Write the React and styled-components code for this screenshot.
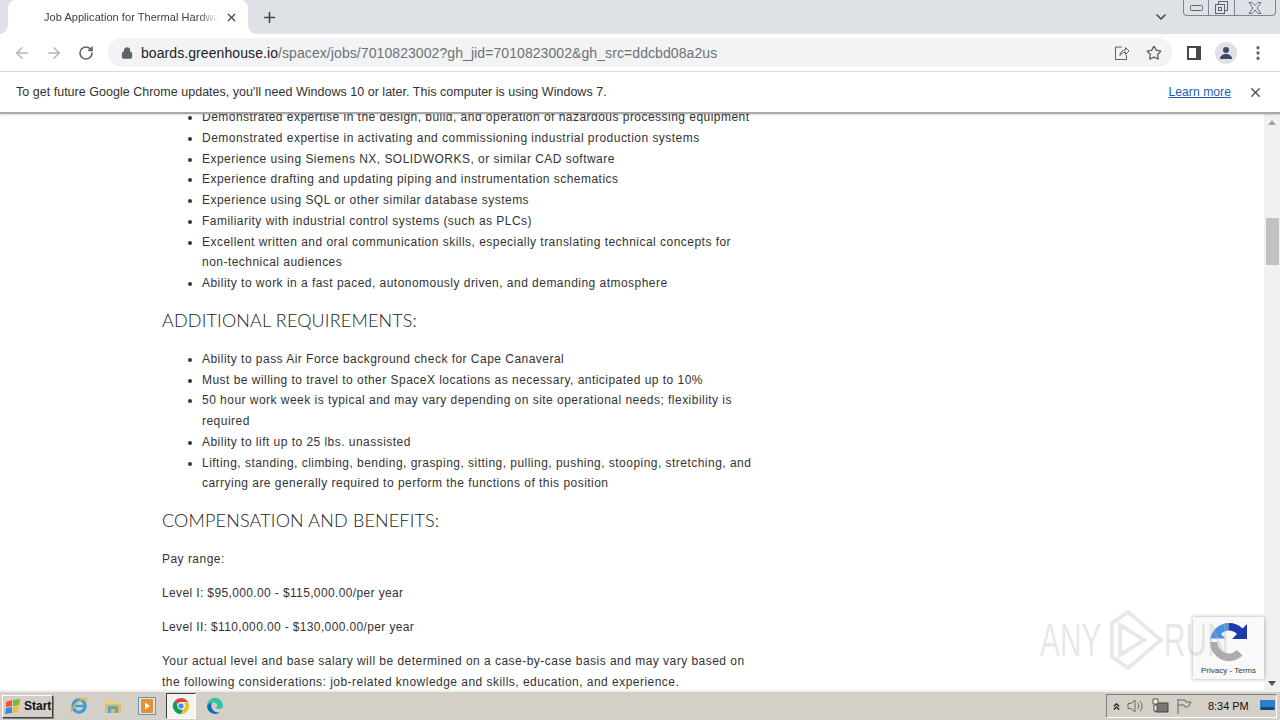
import styled, { createGlobalStyle } from 'styled-components';
import { ArrowLeft, ArrowRight, RotateCw, Lock, Star, X, Plus, ChevronDown, EllipsisVertical, ChevronsUp } from 'lucide-react';

const Global = createGlobalStyle`
    html, body { margin: 0; padding: 0; height: 100%; overflow: hidden; }
    body { font-family: "Liberation Sans", Arial, sans-serif; background: #fff; }
    #root { height: 100%; }
`;

const Page = styled.div`
    position: relative;
    width: 1280px;
    height: 720px;
    display: flex;
    flex-direction: column;
    overflow: hidden;
`;

/* tab strip */
const TabStrip = styled.div`
    height: 34px;
    flex: none;
    background: #dee1e6;
    display: flex;
    align-items: flex-end;
    padding-left: 8px;
    position: relative;
`;
const Tab = styled.div`
    position: relative;
    width: 240px;
    height: 34px;
    background: #fff;
    border-radius: 8px 8px 0 0;
    display: flex;
    align-items: center;
    padding: 0 10px 0 36px;
    box-sizing: border-box;
    gap: 6px;
    &::before, &::after {
        content: '';
        position: absolute;
        bottom: 0;
        width: 8px;
        height: 8px;
    }
    &::before {
        left: -8px;
        background: radial-gradient(circle at 0 0, #dee1e6 7.5px, #fff 8px);
    }
    &::after {
        right: -8px;
        background: radial-gradient(circle at 100% 0, #dee1e6 7.5px, #fff 8px);
    }
`;
const TabTitle = styled.div`
    flex: 1;
    font-size: 11px;
    letter-spacing: 0.05px;
    color: #3c4043;
    white-space: nowrap;
    overflow: hidden;
    -webkit-mask-image: linear-gradient(to right, #000 88%, transparent);
    mask-image: linear-gradient(to right, #000 88%, transparent);
`;
const NewTab = styled.div`
    margin-left: 13px;
    height: 34px;
    display: flex;
    align-items: center;
    color: #45484c;
`;
const TabListBtn = styled.div`
    position: absolute;
    right: 111px;
    top: 9px;
    color: #45484c;
`;
const WinButtons = styled.div`
    position: absolute;
    right: 4px;
    top: 0;
    width: 93px;
    height: 16px;
    box-sizing: border-box;
    display: flex;
    border: 1px solid #7d8791;
    border-top: none;
    border-radius: 0 0 4px 4px;
`;
const WinBtn = styled.div`
    width: ${(p) => p.$w}px;
    display: flex;
    align-items: center;
    justify-content: center;
    & + & { border-left: 1px solid #7d8791; }
`;

/* toolbar */
const Toolbar = styled.div`
    height: 38px;
    flex: none;
    background: #fff;
    border-bottom: 1px solid #dadce0;
    box-sizing: border-box;
    display: flex;
    align-items: center;
    padding-left: 6px;
    color: #5f6368;
`;
const NavBtn = styled.div`
    width: 32px;
    display: flex;
    justify-content: center;
    color: ${(p) => (p.$off ? '#b4b6b9' : '#5f6368')};
`;
const Omnibox = styled.div`
    width: 1064px;
    height: 29px;
    margin-left: 6px;
    background: #f1f3f4;
    border-radius: 15px;
    display: flex;
    align-items: center;
    padding: 0 2px 0 13px;
    box-sizing: border-box;
`;
const Url = styled.div`
    flex: 1;
    margin-left: 8px;
    font-size: 14px;
    letter-spacing: 0.08px;
    color: #6d7175;
    white-space: nowrap;
    & b { font-weight: 400; color: #202124; }
`;
const OmniIcon = styled.div`
    width: 32px;
    display: flex;
    justify-content: center;
    color: #5f6368;
`;
const SidePanelIcon = styled.div`
    width: 14px;
    height: 14px;
    margin-left: 15px;
    border: 2px solid #45484c;
    border-right-width: 5px;
    box-sizing: border-box;
    background: #fff;
`;
const Avatar = styled.div`
    width: 22px;
    height: 22px;
    margin-left: 14px;
    border-radius: 50%;
    background: #dee1e6;
    display: flex;
    align-items: center;
    justify-content: center;
`;
const MenuBtn = styled.div`
    margin-left: 12px;
    display: flex;
    color: #5f6368;
`;

/* infobar */
const InfoBar = styled.div`
    height: 42px;
    flex: none;
    background: #fff;
    border-bottom: 2px solid #a9a9a9;
    box-shadow: 0 1px 2px rgba(0, 0, 0, 0.15);
    box-sizing: border-box;
    display: flex;
    align-items: center;
    padding: 0 17px 0 16px;
    font-size: 12.5px;
    letter-spacing: 0.02px;
    color: #333;
    position: relative;
    z-index: 2;
`;
const InfoText = styled.div`
    flex: 1;
`;
const LearnMore = styled.a`
    color: #1a5fb4;
    font-size: 12.2px;
    text-decoration: underline;
    margin-right: 17px;
`;

/* page body */
const Viewport = styled.div`
    flex: 1;
    min-height: 0;
    display: flex;
    overflow: hidden;
`;
const Content = styled.div`
    flex: 1;
    overflow: hidden;
`;
const Article = styled.article`
    width: 590px;
    margin: -7px 0 0 162px;
    font-size: 12px;
    line-height: 20.75px;
    letter-spacing: 0.47px;
    color: #333;
`;
const List = styled.ul`
    margin: 0;
    padding-left: 40px;
    list-style: disc;
`;
const Heading = styled.h2`
    margin: 15px 0 17px;
    font-family: "Lato", "Liberation Sans", sans-serif;
    font-weight: 300;
    font-size: 18px;
    line-height: 23px;
    letter-spacing: 0.16px;
    color: #222;
`;
const Para = styled.p`
    margin: 0 0 13.2px;
    letter-spacing: ${(p) => (p.$tight ? '0.37px' : 'inherit')};
`;
const ScrollBar = styled.div`
    width: 16px;
    flex: none;
    background: #f1f1f1;
    position: relative;
`;
const ScrollThumb = styled.div`
    position: absolute;
    top: 104px;
    left: 2px;
    width: 13px;
    height: 47px;
    background: #c1c1c1;
`;
const ScrollArrow = styled.div`
    position: absolute;
    left: 4px;
    width: 0;
    height: 0;
    border-left: 4px solid transparent;
    border-right: 4px solid transparent;
    ${(p) => (p.$up ? 'top: 6px; border-bottom: 5px solid #a3a3a3;' : 'bottom: 4px; border-top: 5px solid #505050;')}
`;

/* overlays */
const Recaptcha = styled.div`
    position: absolute;
    right: 16px;
    bottom: 41px;
    width: 71px;
    height: 62px;
    padding-top: 5px;
    box-sizing: border-box;
    background: #f9f9f9;
    box-shadow: 0 0 4px rgba(0, 0, 0, 0.35);
    display: flex;
    flex-direction: column;
    align-items: center;
    z-index: 3;
`;
const RecaptchaLinks = styled.div`
    position: absolute;
    bottom: 4px;
    left: 0;
    width: 100%;
    text-align: center;
    font-size: 8px;
    color: #333;
    white-space: nowrap;
`;
const Watermark = styled.div`
    position: absolute;
    left: 1040px;
    top: 609px;
    display: flex;
    align-items: center;
    height: 62px;
    z-index: 4;
    pointer-events: none;
`;
const WatermarkWord = styled.div`
    width: ${(p) => p.$w}px;
    font-size: 46px;
    line-height: 62px;
    color: rgba(180, 180, 180, 0.3);
    transform: scaleX(0.65);
    transform-origin: left center;
    white-space: nowrap;
`;

/* taskbar */
const Taskbar = styled.div`
    height: 30px;
    flex: none;
    background: #d4d0c8;
    border-top: 2px solid #f2f0ec;
    box-sizing: border-box;
    display: flex;
    align-items: center;
    position: relative;
    z-index: 5;
`;
const StartBtn = styled.div`
    margin-left: 2px;
    width: 51px;
    height: 23px;
    box-sizing: border-box;
    border: 1px solid;
    border-color: #fff #404040 #404040 #fff;
    box-shadow: 1px 1px 0 #808080;
    display: flex;
    align-items: center;
    gap: 2px;
    padding-left: 2px;
    font-weight: 700;
    font-size: 12px;
    color: #111;
`;
const TaskIcon = styled.div`
    width: ${(p) => p.$w || 34}px;
    height: 26px;
    box-sizing: border-box;
    display: flex;
    align-items: center;
    justify-content: center;
    ${(p) => p.$active && 'background: #f4f3f0; border: 1px solid; border-color: #404040 #fff #fff #404040; margin: 0 2px;'}
`;
const TaskIcons = styled.div`
    display: flex;
    align-items: center;
    margin-left: 9px;
`;
const Tray = styled.div`
    margin-left: auto;
    margin-right: 3px;
    width: 171px;
    height: 24px;
    box-sizing: border-box;
    border: 1px solid;
    border-color: #808080 #fff #fff #808080;
    display: flex;
    align-items: center;
    padding-left: 1px;
    color: #222;
`;
const TrayIcon = styled.div`
    width: ${(p) => p.$w || 24}px;
    flex: none;
    display: flex;
    justify-content: center;
    color: #555;
`;
const Clock = styled.div`
    flex: none;
    width: 40px;
    margin: 0 12px;
    font-size: 11px;
    letter-spacing: -0.05px;
    color: #111;
    white-space: nowrap;
`;

const WinFlag = () => (
    <svg width="17" height="17" viewBox="0 0 17 17">
        <path d="M1 4l6-2v6l-6 1z" fill="#e8582a" />
        <path d="M8 2l7-1-1 6-6 1z" fill="#7fb53c" />
        <path d="M1 10l6-1v6l-7 1z" fill="#3a8ad8" />
        <path d="M8 9l6-1-1 6-5 1z" fill="#f3c02c" />
    </svg>
);

const IeIcon = () => (
    <svg width="20" height="20" viewBox="0 0 20 20">
        <circle cx="10" cy="10" r="6.2" fill="none" stroke="#3f9bd8" strokeWidth="3" />
        <path d="M5 10h10" stroke="#3f9bd8" strokeWidth="2.4" />
        <path d="M2 17c-1-3 6-12 14-15 2 0 2 2 1 4" fill="none" stroke="#e0b64a" strokeWidth="1.4" />
    </svg>
);

const FolderIcon = () => (
    <svg width="20" height="20" viewBox="0 0 20 20">
        <path d="M3 4h5l2 2h7v3H3z" fill="#e8cf80" />
        <path d="M2 8h16v9H2z" fill="#d9bd6b" />
        <path d="M5 10h10v7h-3v-4H8v4H5z" fill="#5ea1c9" />
    </svg>
);

const MediaIcon = () => (
    <svg width="20" height="20" viewBox="0 0 20 20">
        <rect x="1.5" y="1.5" width="17" height="17" fill="#dce6ee" stroke="#6c93b5" />
        <rect x="4" y="3" width="12" height="14" rx="1" fill="#e9902e" />
        <path d="M8 6.5l5 3.5-5 3.5z" fill="#fff" />
    </svg>
);

const ChromeIcon = () => (
    <svg width="18" height="18" viewBox="0 0 18 18">
        <path d="M9 1a8 8 0 0 1 6.93 4H9a4 4 0 0 0-3.7 2.5L3 3.6A8 8 0 0 1 9 1z" fill="#db4437" />
        <path d="M15.93 5A8 8 0 0 1 9 17l3.4-6A4 4 0 0 0 12 6z" fill="#f4c20d" />
        <path d="M3 3.6L6.5 10A4 4 0 0 0 11 12.7L9 17A8 8 0 0 1 3 3.6z" fill="#0f9d58" />
        <circle cx="9" cy="9" r="3.2" fill="#4285f4" stroke="#fff" strokeWidth="1" />
    </svg>
);

const EdgeIcon = () => (
    <svg width="18" height="18" viewBox="0 0 18 18">
        <path d="M1 9a8 8 0 0 1 16-.5c0 2.5-2 3.5-4 3.5-2.500 0-3.500-1-3.500-1.500 3 0 2-5-2.500-5C4 5.500 2.500 7 1 9z" fill="#32c5a0" />
        <path d="M1 9c1.500-2 3-3.500 5.500-3.500C4.500 7 4.500 13 10 15c2 .7 3.500.4 4.500-.3A8 8 0 0 1 1 9z" fill="#0f6cbd" />
    </svg>
);

const ShareIcon = () => (
    <svg width="16" height="16" viewBox="0 0 16 16" fill="none" stroke="#5f6368" strokeWidth="1">
        <path d="M8 2H1.500v12.500h11V10" />
        <path d="M6 10.500c0-3.500 2.500-5.500 5.500-5.500V2.500L15 6l-3.500 3.500V7.200C9 7.200 7.200 8.500 6 10.500z" />
    </svg>
);

const AvatarGlyph = () => (
    <svg width="14" height="14" viewBox="0 0 14 14" fill="#3e4a66">
        <circle cx="7" cy="4" r="3" />
        <path d="M1 13c0-3.500 3-5 6-5s6 1.500 6 5z" />
    </svg>
);

const CloseOutline = () => (
    <svg width="14" height="12" viewBox="0 0 14 12" fill="#e6e8eb" stroke="#646d78" strokeWidth="1">
        <path d="M1 .5h3l3 3 3-3h3L9 6l4 5.500h-3L7 8l-3 3.500H1L5 6z" />
    </svg>
);

const RecaptchaLogo = () => (
    <svg width="40" height="40" viewBox="0 0 40 40">
        <path d="M20 1a19 19 0 0 1 13.500 5.500L38 2v15H23l5-5a11.500 11.500 0 0 0-8-3.500z" fill="#1c3aa9" />
        <path d="M1 20A19 19 0 0 1 20 1v7.500a11.500 11.500 0 0 0-8 3.500l4.500 4.500H1z" fill="#4a90e2" />
        <path d="M1 20h7.500A11.500 11.500 0 0 0 28 28l5.500 5.500A19 19 0 0 1 1 20z" fill="#ababab" />
    </svg>
);

const WatermarkPlay = () => (
    <svg width="56" height="62" viewBox="0 0 56 62" fill="none" stroke="rgba(180,180,180,0.3)" strokeWidth="4">
        <path d="M4 14L20 3l33 28-33 28-16-11z" />
        <path d="M12 16v30l24-15z" />
    </svg>
);

const SpeakerIcon = () => (
    <svg width="18" height="16" viewBox="0 0 18 16" fill="none" stroke="#666" strokeWidth="1">
        <path d="M1 5.500h3L8 2v12l-4-3.500H1z" />
        <path d="M10.500 5a4 4 0 0 1 0 6M13 3a7 7 0 0 1 0 10" />
    </svg>
);

const NetworkIcon = () => (
    <svg width="18" height="17" viewBox="0 0 18 17">
        <rect x="5" y="5" width="12" height="9" fill="#777" stroke="#444" />
        <path d="M2 1h5v5H2zM3 7h3v6H3z" fill="#f4f0d8" stroke="#555" />
    </svg>
);

const FlagIcon = () => (
    <svg width="16" height="17" viewBox="0 0 16 17" fill="none" stroke="#666" strokeWidth="1">
        <path d="M2 1v15M2 2h7l1 2h5l-3 5H9L8 7H2" />
    </svg>
);

const DesktopIcon = () => (
    <svg width="15" height="14" viewBox="0 0 15 14">
        <rect x="0" y="1" width="15" height="10" fill="#2f7fc4" />
        <rect x="1" y="8" width="13" height="3" fill="#17477a" />
    </svg>
);

const firstList = [
    'Demonstrated expertise in the design, build, and operation of hazardous processing equipment',
    'Demonstrated expertise in activating and commissioning industrial production systems',
    'Experience using Siemens NX, SOLIDWORKS, or similar CAD software',
    'Experience drafting and updating piping and instrumentation schematics',
    'Experience using SQL or other similar database systems',
    'Familiarity with industrial control systems (such as PLCs)',
    'Excellent written and oral communication skills, especially translating technical concepts for non-technical audiences',
    'Ability to work in a fast paced, autonomously driven, and demanding atmosphere',
];

const secondList = [
    'Ability to pass Air Force background check for Cape Canaveral',
    'Must be willing to travel to other SpaceX locations as necessary, anticipated up to 10%',
    '50 hour work week is typical and may vary depending on site operational needs; flexibility is required',
    'Ability to lift up to 25 lbs. unassisted',
    'Lifting, standing, climbing, bending, grasping, sitting, pulling, pushing, stooping, stretching, and carrying are generally required to perform the functions of this position',
];

export default function App() {
    return (
        <Page>
            <Global />
            <TabStrip>
                <Tab>
                    <TabTitle>Job Application for Thermal Hardware Engineer</TabTitle>
                    <X size={13} strokeWidth={2.4} color="#45484c" />
                </Tab>
                <NewTab>
                    <Plus size={17} strokeWidth={2.2} />
                </NewTab>
                <TabListBtn>
                    <ChevronDown size={16} strokeWidth={2.4} />
                </TabListBtn>
                <WinButtons>
                    <WinBtn $w={25}>
                        <svg width="13" height="6" viewBox="0 0 13 6" fill="none" stroke="#5c6570">
                            <rect x="0.500" y="0.500" width="12" height="5" rx="1" />
                        </svg>
                    </WinBtn>
                    <WinBtn $w={25}>
                        <svg width="13" height="13" viewBox="0 0 13 13" fill="none" stroke="#5c6570">
                            <rect x="3.500" y="0.500" width="9" height="9" />
                            <rect x="0.500" y="3.500" width="9" height="9" fill="#dee1e6" />
                            <rect x="3.500" y="6.500" width="3" height="3" />
                        </svg>
                    </WinBtn>
                    <WinBtn $w={41}>
                        <CloseOutline />
                    </WinBtn>
                </WinButtons>
            </TabStrip>
            <Toolbar>
                <NavBtn $off>
                    <ArrowLeft size={18} strokeWidth={2} />
                </NavBtn>
                <NavBtn $off>
                    <ArrowRight size={18} strokeWidth={2} />
                </NavBtn>
                <NavBtn>
                    <RotateCw size={16} strokeWidth={2.4} />
                </NavBtn>
                <Omnibox>
                    <Lock size={12} strokeWidth={2.6} color="#5f6368" fill="#5f6368" />
                    <Url>
                        <b>boards.greenhouse.io</b>/spacex/jobs/7010823002?gh_jid=7010823002&amp;gh_src=ddcbd08a2us
                    </Url>
                    <OmniIcon>
                        <ShareIcon />
                    </OmniIcon>
                    <OmniIcon>
                        <Star size={16} strokeWidth={2} />
                    </OmniIcon>
                </Omnibox>
                <SidePanelIcon />
                <Avatar>
                    <AvatarGlyph />
                </Avatar>
                <MenuBtn>
                    <EllipsisVertical size={18} strokeWidth={2.4} />
                </MenuBtn>
            </Toolbar>
            <InfoBar>
                <InfoText>To get future Google Chrome updates, you'll need Windows 10 or later. This computer is using Windows 7.</InfoText>
                <LearnMore>Learn more</LearnMore>
                <X size={15} strokeWidth={2.4} color="#55585c" />
            </InfoBar>
            <Viewport>
                <Content>
                    <Article>
                        <List>
                            {firstList.map((t) => (
                                <li key={t}>{t}</li>
                            ))}
                        </List>
                        <Heading>ADDITIONAL REQUIREMENTS:</Heading>
                        <List>
                            {secondList.map((t) => (
                                <li key={t}>{t}</li>
                            ))}
                        </List>
                        <Heading>COMPENSATION AND BENEFITS:</Heading>
                        <Para>Pay range:</Para>
                        <Para $tight>Level I: $95,000.00 - $115,000.00/per year</Para>
                        <Para $tight>Level II: $110,000.00 - $130,000.00/per year</Para>
                        <Para>
                            Your actual level and base salary will be determined on a case-by-case basis and may vary based on the following
                            considerations: job-related knowledge and skills, education, and experience.
                        </Para>
                    </Article>
                </Content>
                <ScrollBar>
                    <ScrollArrow $up />
                    <ScrollThumb />
                    <ScrollArrow />
                </ScrollBar>
            </Viewport>
            <Recaptcha>
                <RecaptchaLogo />
                <RecaptchaLinks>Privacy - Terms</RecaptchaLinks>
            </Recaptcha>
            <Watermark>
                <WatermarkWord $w={68}>ANY</WatermarkWord>
                <WatermarkPlay />
                <WatermarkWord $w={70}>RUN</WatermarkWord>
            </Watermark>
            <Taskbar>
                <StartBtn>
                    <WinFlag />
                    Start
                </StartBtn>
                <TaskIcons>
                    <TaskIcon>
                        <IeIcon />
                    </TaskIcon>
                    <TaskIcon>
                        <FolderIcon />
                    </TaskIcon>
                    <TaskIcon>
                        <MediaIcon />
                    </TaskIcon>
                    <TaskIcon $active $w={30}>
                        <ChromeIcon />
                    </TaskIcon>
                    <TaskIcon>
                        <EdgeIcon />
                    </TaskIcon>
                </TaskIcons>
                <Tray>
                    <TrayIcon $w={16}>
                        <ChevronsUp size={11} strokeWidth={2.6} color="#222" />
                    </TrayIcon>
                    <TrayIcon>
                        <SpeakerIcon />
                    </TrayIcon>
                    <TrayIcon>
                        <NetworkIcon />
                    </TrayIcon>
                    <TrayIcon>
                        <FlagIcon />
                    </TrayIcon>
                    <Clock>8:34 PM</Clock>
                    <TrayIcon $w={15}>
                        <DesktopIcon />
                    </TrayIcon>
                </Tray>
            </Taskbar>
        </Page>
    );
}
